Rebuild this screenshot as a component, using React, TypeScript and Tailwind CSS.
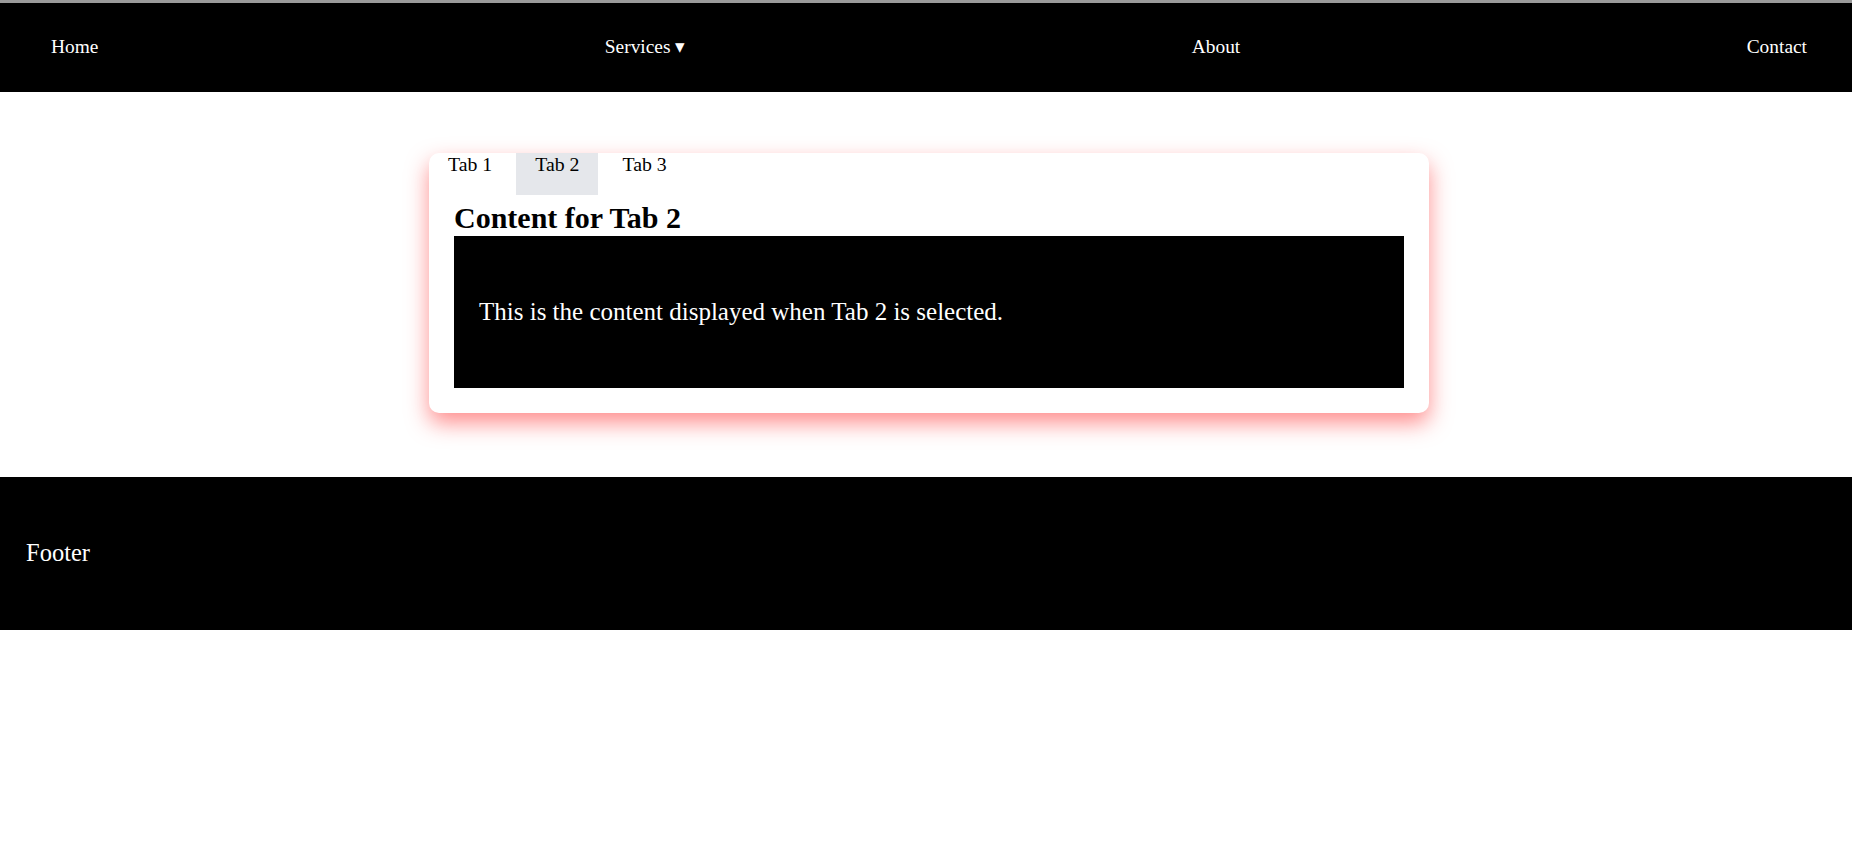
import { useState } from "react"

const tabs = [
  { id: 1, label: "Tab 1" },
  { id: 2, label: "Tab 2" },
  { id: 3, label: "Tab 3" },
]

const NavBar = () => {
  return (
    <nav className="border-t-[3px] border-[#9a9a9a] bg-black">
      <ul className="flex h-[89px] items-center justify-between pb-[2px] pl-[51px] pr-[45px] text-[19.4px] text-white">
        <li>Home</li>
        <li>Services ▾</li>
        <li>About</li>
        <li>Contact</li>
      </ul>
    </nav>
  )
}

const TabCard = () => {
  const [active, setActive] = useState(2)

  return (
    <div className="mx-auto w-[1000px] rounded-[10px] bg-white px-[25px] pb-[25px] shadow-[0_10px_22px_rgba(255,50,50,0.55)]">
      <div className="-mx-[25px] flex h-[42px] gap-[5px]">
        {tabs.map((tab) => (
          <button
            key={tab.id}
            onClick={() => setActive(tab.id)}
            className={
              "h-full px-[19px] pb-[19px] text-[19.8px] leading-[23px] text-black " +
              (active === tab.id ? "bg-[#e5e7eb]" : "bg-transparent")
            }
          >
            {tab.label}
          </button>
        ))}
      </div>
      <h2 className="mt-[7px] text-[30px] font-bold leading-[32px] text-black">
        Content for Tab {active}
      </h2>
      <div className="mt-[2px] flex h-[152px] items-center bg-black px-[25px]">
        <p className="text-[25px] text-white">
          This is the content displayed when Tab {active} is selected.
        </p>
      </div>
    </div>
  )
}

export default function App() {
  return (
    <div className="min-h-[856px] bg-white font-['Liberation_Serif',serif]">
      <NavBar />
      <main className="pb-[64px] pl-[6px] pt-[61px]">
        <TabCard />
      </main>
      <footer className="flex h-[153px] items-center bg-black px-[26px]">
        <p className="text-[24.5px] text-white">Footer</p>
      </footer>
    </div>
  )
}
